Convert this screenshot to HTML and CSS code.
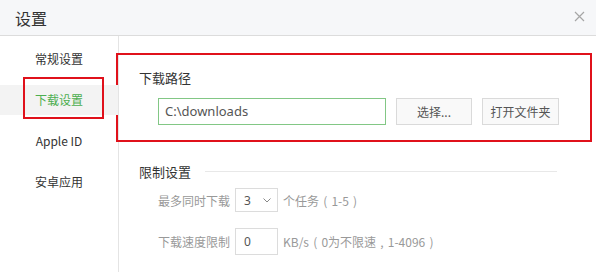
FILE: index.html
```html
<!DOCTYPE html>
<html lang="zh-CN">
<head>
  <meta charset="UTF-8">
  <title>设置</title>
  <link rel="stylesheet" href="styles.css">
</head>
<body>

  <div class="window">

    <!-- barre de titre -->
    <div class="titlebar">
      <span class="title">设置</span>
      <svg class="close" width="11" height="11" viewBox="0 0 11 11">
        <path d="M1 1 L10 10 M10 1 L1 10" stroke="#a6a6a6" stroke-width="1.2" fill="none"/>
      </svg>
    </div>

    <div class="main">

      <div class="sidebar">
        <div class="side-item">常规设置</div>
        <div class="side-item active">下载设置</div>
        <div class="side-item">Apple ID</div>
        <div class="side-item">安卓应用</div>
      </div>

      <div class="content">

        <div class="path-box">
          <div class="section-title">下载路径</div>
          <div class="path-row">
            <div class="path-input">C:\downloads</div>
            <button class="btn btn-choose">选择...</button>
            <button class="btn btn-open">打开文件夹</button>
          </div>
        </div>

        <div class="limit-box">
          <div class="limit-head">
            <span class="section-title">限制设置</span>
            <span class="head-line"></span>
          </div>
          <div class="limit-row first">
            <span class="label">最多同时下载</span>
            <div class="field select">
              <span>3</span>
              <svg width="8" height="5" viewBox="0 0 8 5">
                <path d="M0.5 0.5 L4 4 L7.5 0.5" stroke="#888" stroke-width="1" fill="none"/>
              </svg>
            </div>
            <span class="hint">个任务 ( 1-5 )</span>
          </div>
          <div class="limit-row">
            <span class="label">下载速度限制</span>
            <div class="field speed">0</div>
            <span class="hint">KB/s ( 0为不限速 , 1-4096 )</span>
          </div>
        </div>

      </div>
    </div>
  </div>

</body>
</html>
```

FILE: styles.css
```css
body {
  margin: 0;
  background-color: #ffffff;
  font-family: "Noto Sans CJK SC", "Noto Sans", sans-serif;
  font-size: 12px;
  color: #333;
}

.window {
  width: 596px;
  height: 272px;
  overflow: hidden;
}

.titlebar {
  height: 35px;
  border-bottom: 1px solid #dcdcdc;
  background-color: #f6f7f9;
  display: flex;
  align-items: center;
  justify-content: space-between;
  padding: 0 11px 0 15px;
}

.title {
  font-size: 16px;
  color: #333;
}

.close {
  margin-top: -2px;
}

.main {
  display: flex;
  height: 236px;
}

.sidebar {
  width: 118px;
  border-right: 1px solid #e4e4e4;
  padding-top: 8px;
}

.side-item {
  position: relative;
  height: 30px;
  line-height: 30px;
  margin-bottom: 11px;
  text-align: center;
  color: #333;
}

.side-item.active {
  background-color: #f3f3f3;
  color: #4cae4f;
}

/* cadre rouge autour de l'onglet actif */
.side-item.active::after {
  content: "";
  position: absolute;
  left: 23px;
  top: -8px;
  width: 77px;
  height: 38px;
  border: 2px solid #e0111b;
}

.content {
  flex: 1;
  padding-top: 17px;
}

.path-box {
  margin-left: -3px;
  width: 451px;
  border: 2px solid #e0111b;
  padding: 14px 0 15px 21px;
}

.section-title {
  font-size: 13px;
  line-height: 18px;
  color: #333;
}

.path-row {
  display: flex;
  gap: 10px;
  margin-top: 11px;
  padding-left: 19px;
}

.path-input {
  width: 220px;
  height: 25px;
  line-height: 25px;
  border: 1px solid #82c785;
  padding-left: 6px;
  color: #555;
  font-family: "Noto Sans", sans-serif;
  font-size: 13px;
}

.btn {
  height: 27px;
  border: 1px solid #dadada;
  background-color: #f9f9f9;
  color: #555;
  font-family: "Noto Sans CJK SC", sans-serif;
  font-size: 12px;
  padding: 0;
}

.btn-choose {
  width: 76px;
}

.btn-open {
  width: 77px;
}

.limit-box {
  padding-left: 20px;
  margin-top: 21px;
  width: 418px;
}

.limit-head {
  display: flex;
  align-items: center;
}

.head-line {
  flex: 1;
  height: 1px;
  background-color: #e8e8e8;
  margin-left: 14px;
  margin-top: -2px;
}

.limit-row {
  display: flex;
  align-items: center;
  margin-top: 16px;
  padding-left: 19px;
}

.limit-row.first {
  margin-top: 7px;
}

.label {
  width: 77px;
  color: #999;
}

.field {
  box-sizing: border-box;
  width: 43px;
  height: 25px;
  border: 1px solid #dcdcdc;
  color: #555;
  font-family: "Noto Sans", sans-serif;
  font-size: 12px;
  line-height: 23px;
}

.select {
  display: flex;
  align-items: center;
  justify-content: space-between;
  padding: 0 6px 0 8px;
  height: 24px;
}

.speed {
  padding-left: 8px;
  height: 27px;
  line-height: 25px;
}

.hint {
  margin-left: 5px;
  word-spacing: 1.5px;
  color: #999;
}
```
